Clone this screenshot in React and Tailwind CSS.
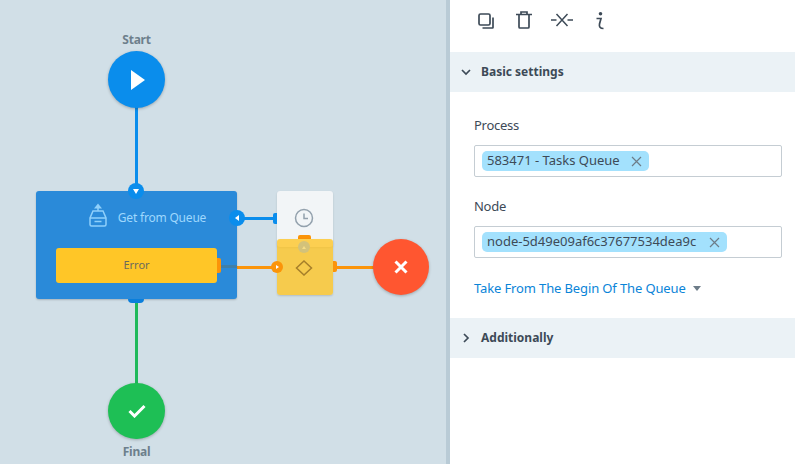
import React from "react";

const font = { fontFamily: '"Noto Sans", sans-serif' };

function Chip({ label, closeGap }) {
  return (
    <span className={`inline-flex h-5 items-center rounded-[5px] bg-[#a3e1fd] pl-[5px] pr-[7px] text-[13px] text-[#3d4a57] ${closeGap}`}>
      <span>{label}</span>
      <svg width="11" height="11" viewBox="0 0 11 11" className="text-[#6d7c88]">
        <path d="M1 1l9 9M10 1l-9 9" stroke="currentColor" strokeWidth="1.2" fill="none" />
      </svg>
    </span>
  );
}

function Field({ label, chip, closeGap }) {
  return (
    <div className="flex flex-col gap-[11px]">
      <div className="text-[13px] leading-[18px] tracking-[-0.02em] text-[#3d4a57]">{label}</div>
      <div className="flex h-8 items-center rounded-[2px] border border-[#c5cdd3] bg-white px-[7px]">
        <Chip label={chip} closeGap={closeGap} />
      </div>
    </div>
  );
}

function Section({ title, open }) {
  return (
    <div className="flex h-10 items-center gap-[10px] bg-[#ebf2f6] pl-[11px] text-[12px] font-bold text-[#3d4a57]">
      <svg width="10" height="10" viewBox="0 0 10 10">
        {open ? (
          <path d="M1 3l4 4 4-4" stroke="#3d4a57" strokeWidth="1.7" fill="none" />
        ) : (
          <path d="M3 1l4 4-4 4" stroke="#3d4a57" strokeWidth="1.7" fill="none" />
        )}
      </svg>
      <span>{title}</span>
    </div>
  );
}

function Canvas() {
  return (
    <div className="relative h-full w-[446px] shrink-0 overflow-hidden bg-[#d1dfe7]">
      {/* connectors */}
      <div className="absolute left-[135px] top-[100px] h-[92px] w-[3px] bg-[#0a8dec]" />
      <div className="absolute left-[135px] top-[300px] h-[90px] w-[3px] bg-[#1fb95b]" />
      <div className="absolute left-[237px] top-[217px] h-[3px] w-[38px] bg-[#0a8dec]" />
      <div className="absolute left-[237px] top-[266px] h-[3px] w-[38px] bg-[#fb9409]" />
      <div className="absolute left-[335px] top-[266px] h-[3px] w-[40px] bg-[#fb9409]" />

      {/* start */}
      <div className="absolute left-[108px] top-[31px] flex w-[57px] flex-col items-center">
        <div className="text-[12px] font-bold leading-[17px] tracking-[-0.02em] text-[#6d7f8c]">Start</div>
        <div className="mt-[3px] flex h-[57px] w-[57px] items-center justify-center rounded-full bg-[#0a8dec] shadow-[0_1px_3px_rgba(0,0,0,0.25)]">
          <svg width="15" height="20" viewBox="0 0 15 20" className="ml-[4px]">
            <path d="M0 0l14 10L0 20z" fill="#fff" />
          </svg>
        </div>
      </div>

      {/* final */}
      <div className="absolute left-[108px] top-[383px] flex w-[57px] flex-col items-center">
        <div className="flex h-[56px] w-[57px] items-center justify-center rounded-full bg-[#1ebf55] shadow-[0_1px_3px_rgba(0,0,0,0.25)]">
          <svg width="18" height="14" viewBox="0 0 18 14">
            <path d="M1.5 7l5 5L16.5 2" stroke="#fff" strokeWidth="3" fill="none" />
          </svg>
        </div>
        <div className="mt-[4px] text-[12px] font-bold leading-[17px] tracking-[-0.02em] text-[#6d7f8c]">Final</div>
      </div>

      {/* queue node */}
      <div className="absolute left-[36px] top-[191px] h-[108px] w-[201px] rounded-[3px] bg-[#2a8ad9] shadow-[0_1px_2px_rgba(0,0,0,0.2)]">
        <div className="flex h-[57px] items-center justify-center gap-[11px] pb-[3px] pl-[22px]">
          <svg width="18" height="24" viewBox="0 0 18 24" fill="none" stroke="#8fd0fb" strokeWidth="1.5" className="-mt-[7px]">
            <path d="M5 5.500L9 .5l4 5z" fill="#8fd0fb" stroke="none" />
            <path d="M9 5v3" />
            <path d="M4 8h10l3 7v6.500a1.500 1.500 0 0 1-1.500 1.500h-13A1.500 1.500 0 0 1 1 21.500V15z" />
            <path d="M1 15h16" />
            <path d="M5.500 18.500h7" />
          </svg>
          <span className="text-[12px] tracking-[-0.2px] text-[#9fd8fd]">Get from Queue</span>
        </div>
        <div className="relative ml-[20px] flex h-[35px] w-[161px] items-center justify-center rounded-[3px] bg-[#ffc627] text-[11px] text-[#6b6a5c]">
          Error
          <div className="absolute right-[-4px] top-[10px] h-[15px] w-[4px] rounded-r-[2px] bg-[#fb9409]" />
        </div>
        <div className="absolute left-[92px] top-[108px] h-[4px] w-[16px] rounded-b-[4px] bg-[#0a7fdc]" />
      </div>
      <div className="absolute left-[221px] top-[265px] h-[3px] w-[16px] bg-[#3f7fa8]" />

      {/* ports on queue node */}
      <div className="absolute left-[128px] top-[183px] flex h-4 w-4 items-center justify-center rounded-full bg-[#0a8dec]">
        <svg width="6" height="5" viewBox="0 0 6 5"><path d="M0 0h6L3 5z" fill="#fff" /></svg>
      </div>
      <div className="absolute left-[229px] top-[210px] flex h-4 w-4 items-center justify-center rounded-full bg-[#0a8dec]">
        <svg width="4" height="6" viewBox="0 0 4 6"><path d="M4 0v6L0 3z" fill="#fff" /></svg>
      </div>

      {/* timer node */}
      <div className="absolute left-[277px] top-[191px] flex h-[56px] w-[56px] justify-center rounded-[3px] bg-[#f2f5f7] pr-[3px] pt-[17px] shadow-[0_1px_2px_rgba(0,0,0,0.15)]">
        <svg width="20" height="20" viewBox="0 0 20 20" fill="none" stroke="#93a1ad" strokeWidth="1.5">
          <circle cx="10" cy="10" r="8.500" />
          <path d="M10 5.500v5h4" />
        </svg>
      </div>
      <div className="absolute left-[273px] top-[213px] h-[11px] w-[4px] rounded-l-[2px] bg-[#0a8dec]" />
      <div className="absolute left-[298px] top-[235px] h-[4px] w-[13px] rounded-t-[2px] bg-[#fb9409]" />

      {/* condition node */}
      <div className="absolute left-[277px] top-[239px] flex h-[56px] w-[56px] items-center justify-center rounded-[3px] bg-[#ffc627]/80 pr-[2px] shadow-[0_1px_2px_rgba(0,0,0,0.15)]">
        <svg width="18" height="16" viewBox="0 0 18 16" fill="none" stroke="#a67f2a" strokeWidth="1.500" className="mt-[1px]">
          <path d="M9 1l7.500 7L9 15 1.500 8z" />
        </svg>
      </div>
      <div className="absolute left-[298px] top-[241px] flex h-[12px] w-[12px] items-center justify-center rounded-full bg-[#d3c27a]">
        <svg width="4" height="3" viewBox="0 0 4 3"><path d="M2 0l2 3H0z" fill="#f5dd88" /></svg>
      </div>
      <div className="absolute left-[271px] top-[261px] flex h-3 w-3 items-center justify-center rounded-full bg-[#fb9409]">
        <svg width="3" height="4" viewBox="0 0 3 4"><path d="M0 0l3 2-3 2z" fill="#fff" /></svg>
      </div>
      <div className="absolute left-[333px] top-[261px] h-[11px] w-[4px] rounded-r-[2px] bg-[#fb9409]" />

      {/* end */}
      <div className="absolute left-[373px] top-[239px] flex h-[56px] w-[56px] items-center justify-center rounded-full bg-[#ff5630] shadow-[0_1px_3px_rgba(0,0,0,0.25)]">
        <svg width="14" height="14" viewBox="0 0 14 14">
          <path d="M1.500 1.500l11 11M12.500 1.500l-11 11" stroke="#fff" strokeWidth="3" fill="none" />
        </svg>
      </div>
    </div>
  );
}

export default function App() {
  return (
    <div className="flex h-[464px] w-[795px] overflow-hidden bg-white" style={font}>
      <Canvas />
      <div className="h-full w-[4px] shrink-0 bg-[#b9cbd6]" />
      <div className="flex min-w-0 flex-1 flex-col">
        <div className="flex h-[52px] items-start pl-[28px] pt-[12px] text-[#3d4a57]">
          <svg width="16" height="16" viewBox="0 0 16 16" fill="none" stroke="currentColor" strokeWidth="1.700" className="mt-[1px]">
            <rect x="1" y="1" width="11" height="11" rx="1.500" />
            <path d="M15 4.500v10a.5.5 0 0 1-.5.500H4.500" />
          </svg>
          <svg width="16" height="18" viewBox="0 0 16 18" fill="none" stroke="currentColor" strokeWidth="1.700" className="ml-[22px] -mt-[1px]">
            <path d="M0 3.500h16M5 3.500V1h6v2.500M3 3.500v12.500a1 1 0 0 0 1 1h8a1 1 0 0 0 1-1V3.500" />
          </svg>
          <svg width="22" height="14" viewBox="0 0 22 14" fill="none" stroke="currentColor" strokeWidth="1.500" className="ml-[19px] mt-[1px]">
            <path d="M0 7h5.500M16.500 7H22M5.500 1l11 12M16.500 1l-11 12" />
          </svg>
          <svg width="8" height="18" viewBox="0 0 8 18" fill="none" stroke="currentColor" strokeWidth="1.700" className="ml-[23px]">
            <circle cx="4.500" cy="1.800" r="1.800" fill="currentColor" stroke="none" />
            <path d="M.5 6.500H5L3.500 12c-.5 2.500.5 4.500 4 4.500" />
          </svg>
        </div>
        <Section title="Basic settings" open />
        <div className="flex flex-col gap-[20px] pl-[24px] pr-[13px] pt-[24px]">
          <Field label="Process" chip="583471 - Tasks Queue" closeGap="gap-[11px]" />
          <Field label="Node" chip="node-5d49e09af6c37677534dea9c" closeGap="gap-[13px]" />
        </div>
        <div className="mb-[20px] ml-[24px] mt-[21px] flex h-[19px] items-center gap-[7px] text-[13px] tracking-[-0.13px] text-[#0a84d8]">
          <span>Take From The Begin Of The Queue</span>
          <svg width="8" height="5" viewBox="0 0 8 5"><path d="M0 0h8L4 5z" fill="#6d7c88" /></svg>
        </div>
        <Section title="Additionally" />
      </div>
    </div>
  );
}
